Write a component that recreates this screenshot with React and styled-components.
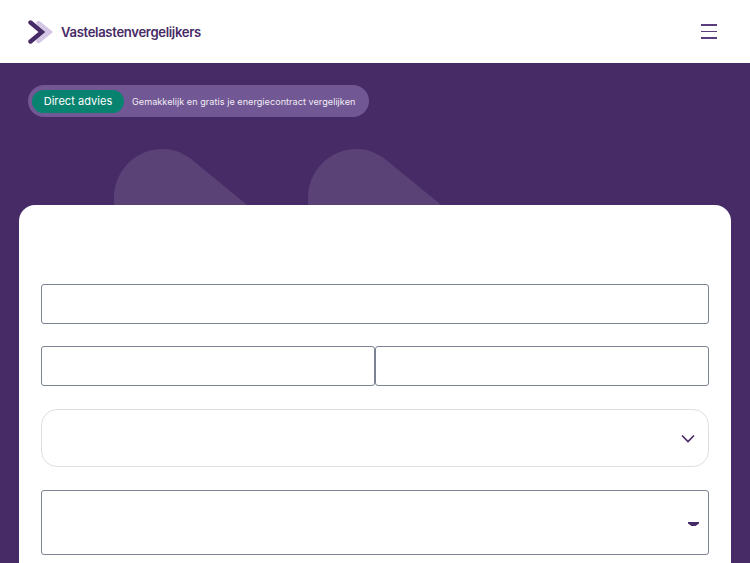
import React from "react";
import styled, { createGlobalStyle } from "styled-components";

const Global = createGlobalStyle`
  html, body { margin: 0; padding: 0; height: 563px; overflow: hidden; background: #472b66; }
  * { box-sizing: border-box; }
  body { font-family: "Inter", "Liberation Sans", sans-serif; }
`;

const Page = styled.div`
  width: 750px;
  display: flex;
  flex-direction: column;
`;

const Header = styled.header`
  height: 63px;
  background: #fff;
  display: flex;
  align-items: center;
  justify-content: space-between;
  padding: 0 33px 0 28px;
`;

const Brand = styled.div`
  display: flex;
  align-items: center;
  gap: 8px;
`;

const BrandName = styled.span`
  font-size: 13.1px;
  font-weight: 600;
  letter-spacing: -0.33px;
  color: #472b66;
`;

const MenuButton = styled.button`
  width: 16px;
  height: 14.5px;
  padding: 0;
  border: 0;
  background: none;
  display: flex;
  flex-direction: column;
  justify-content: space-between;
`;

const MenuLine = styled.span`
  display: block;
  height: 1.5px;
  background: #5b3d7d;
`;

const Hero = styled.section`
  position: relative;
  background: #472b66;
  padding: 22px 19px 0;
  height: 500px;
  overflow: hidden;
`;

const Badge = styled.div`
  display: inline-flex;
  align-items: center;
  gap: 8px;
  margin-left: 9px;
  height: 32px;
  width: 341px;
  padding: 0 4px;
  border-radius: 16px;
  background: #715794;
`;

const BadgeTag = styled.span`
  width: 92px;
  height: 23px;
  border-radius: 12px;
  background: #088370;
  color: #fff;
  font-size: 11px;
  font-weight: 400;
  letter-spacing: 0.05px;
  display: flex;
  align-items: center;
  justify-content: center;
`;

const BadgeText = styled.span`
  color: #f1edf5;
  font-size: 9.1px;
  font-weight: 400;
  letter-spacing: 0.04px;
`;

const Shapes = styled.svg`
  position: absolute;
  left: 0;
  top: 0;
`;

const Card = styled.div`
  position: relative;
  margin-top: 88px;
  background: #fff;
  border-radius: 16px 16px 0 0;
  padding: 79px 22px 40px;
  display: flex;
  flex-direction: column;
  height: 420px;
`;

const Input = styled.div`
  height: 40px;
  border: 1px solid #7c8493;
  border-radius: 3px;
  background: #fff;
`;

const Row = styled.div`
  display: grid;
  grid-template-columns: 1fr 1fr;
  margin-top: 22px;
`;

const SoftSelect = styled.div`
  margin-top: 23px;
  height: 58px;
  border: 1px solid #dfdfe3;
  border-radius: 16px;
  display: flex;
  align-items: center;
  justify-content: flex-end;
  padding: 0 13px 0 0;
`;

const NativeSelect = styled.div`
  margin-top: 23px;
  height: 65px;
  border: 1px solid #7c8493;
  border-radius: 3px;
  display: flex;
  align-items: center;
  justify-content: flex-end;
  padding: 4px 9px 0 0;
`;

export default function App() {
  return (
    <Page>
      <Global />
      <Header>
        <Brand>
          <svg width="25" height="24" viewBox="0 0 25 24" fill="none" strokeLinecap="round" strokeLinejoin="miter">
            <path d="M10.500 3 L21.500 12 L10.500 21" stroke="#d4c7e6" strokeWidth="4.400" />
            <path d="M2.500 2.500 L14 12 L2.500 21.500" stroke="#472b66" strokeWidth="4.400" />
          </svg>
          <BrandName>Vastelastenvergelijkers</BrandName>
        </Brand>
        <MenuButton aria-label="Menu">
          <MenuLine />
          <MenuLine />
          <MenuLine />
        </MenuButton>
      </Header>
      <Hero>
        <Shapes width="750" height="160" viewBox="0 0 750 160" fill="#5b4276">
          <path d="M114 142 V135 A48.500 48.500 0 0 1 162.500 86 C174 86 183 90 191 96 L257 150 V142 Z" />
          <path d="M308 142 V135 A48.500 48.500 0 0 1 356.500 86 C368 86 377 90 385 96 L451 150 V142 Z" />
        </Shapes>
        <Badge>
          <BadgeTag>Direct advies</BadgeTag>
          <BadgeText>Gemakkelijk en gratis je energiecontract vergelijken</BadgeText>
        </Badge>
        <Card>
          <Input />
          <Row>
            <Input />
            <Input />
          </Row>
          <SoftSelect>
            <svg width="14" height="9" viewBox="0 0 14 9" fill="none">
              <path d="M1 1.500 L7 7.500 L13 1.500" stroke="#472b66" strokeWidth="1.700" />
            </svg>
          </SoftSelect>
          <NativeSelect>
            <svg width="11" height="5" viewBox="0 0 11 5">
              <path d="M0 0 H11 V1.500 L7.500 4 H3.500 L0 1.500 Z" fill="#472b66" />
            </svg>
          </NativeSelect>
        </Card>
      </Hero>
    </Page>
  );
}
